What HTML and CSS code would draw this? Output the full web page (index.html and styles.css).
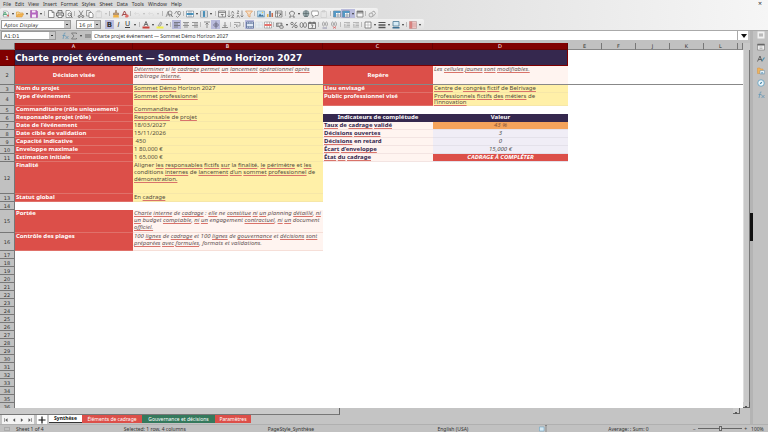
FILE: index.html
```html
<!DOCTYPE html>
<html lang="fr">
<head>
<meta charset="utf-8">
<title>Charte projet événement</title>
<link rel="stylesheet" href="styles.css">
</head>
<body>
<svg class="defs" aria-hidden="true">
  <symbol id="template" viewBox="0 0 16 16"><path d="M3 2h7l3 3v9H3z" fill="#eef4ee" stroke="#889" /><path d="M2 11L6 4l4 7M4 9h4" fill="none" stroke="#3c9a68" stroke-width="1.6"/><circle cx="12" cy="11" r="2" fill="#d8645c"/></symbol>
  <symbol id="folder" viewBox="0 0 16 16"><path d="M1 14V4h5l2 2h6v3" fill="#f8d9a0" stroke="#dca23c" stroke-width="1.4"/><path d="M1 14l3-6h11l-3 6z" fill="#f2b552" stroke="#d8923a"/></symbol>
  <symbol id="save" viewBox="0 0 16 16"><path d="M1 1h12l2 2v12H1z" fill="#b566c0" stroke="#9a489f"/><path d="M4 1h7v4H4zM4 9h8v6H4z" fill="#f6eaf7"/></symbol>
  <symbol id="page" viewBox="0 0 16 16"><path d="M3 1h7l4 4v10H3zM10 1v4h4" fill="#fafafa" stroke="#666" stroke-width="1.4"/></symbol>
  <symbol id="print" viewBox="0 0 16 16"><path d="M4 6V1h8v5M4 12H1V6h14v6h-3" fill="#ddd" stroke="#555" stroke-width="1.5"/><path d="M4 10h8v5H4z" fill="#fff" stroke="#555" stroke-width="1.4"/></symbol>
  <symbol id="preview" viewBox="0 0 16 16"><path d="M2 1h7l4 4v10H2z" fill="#fafafa" stroke="#777" stroke-width="1.4"/><circle cx="9" cy="9" r="3" fill="none" stroke="#555" stroke-width="1.4"/><path d="M11 11l4 4" stroke="#555" stroke-width="1.6"/></symbol>
  <symbol id="cut" viewBox="0 0 16 16"><path d="M4 1l6 10M12 1L6 11" stroke="#777" stroke-width="1.6"/><circle cx="4.500" cy="13" r="2" fill="none" stroke="#555" stroke-width="1.5"/><circle cx="11.500" cy="13" r="2" fill="none" stroke="#555" stroke-width="1.5"/></symbol>
  <symbol id="copy" viewBox="0 0 16 16"><path d="M1 1h6l3 3v8H1z" fill="#eee" stroke="#777" stroke-width="1.3"/><path d="M6 5h5l3 3v7H6z" fill="#fff" stroke="#666" stroke-width="1.3"/></symbol>
  <symbol id="paste" viewBox="0 0 16 16"><path d="M2 3h11v12H2zM5 1h5v3H5z" fill="#e6e6e6" stroke="#c4c4c4"/></symbol>
  <symbol id="brush" viewBox="0 0 16 16"><path d="M7 1h2v5h4v4H3V6h4z" fill="#c9a17a" stroke="#80684e"/><path d="M3 10h10l1 5H2z" fill="#f0b244"/></symbol>
  <symbol id="clear" viewBox="0 0 16 16"><path d="M2 12L7 2l5 10M4 9h6" fill="none" stroke="#9a3434" stroke-width="1.7"/><path d="M8 12l4-4 4 4-3 3H9z" fill="#df6d66"/></symbol>
  <symbol id="faint" viewBox="0 0 16 16"><path d="M3 7h8q3 1 1 5M6 4L3 7l3 3" fill="none" stroke="#d8d8d8" stroke-width="1.4"/></symbol>
  <symbol id="find" viewBox="0 0 16 16"><path d="M2 14L6 3l4 11M4 10h4" fill="none" stroke="#888" stroke-width="1.4"/><circle cx="10" cy="6" r="4" fill="none" stroke="#666" stroke-width="1.3"/><path d="M12 9l3 5" stroke="#555" stroke-width="1.6"/></symbol>
  <symbol id="spell" viewBox="0 0 16 16"><path d="M1 8l4-6 3 6M8 3h4q3 2 0 3 3 2 0 3H8z" fill="none" stroke="#777" stroke-width="1.3"/><path d="M4 12l3 3 6-6" fill="none" stroke="#888" stroke-width="1.6"/></symbol>
  <symbol id="rows" viewBox="0 0 16 16"><path d="M1 2h14v12H1z" fill="#fff" stroke="#567"/><path d="M1 6h14v4H1z" fill="#4a9ac8"/><path d="M6 2v12M10 2v12" stroke="#567"/></symbol>
  <symbol id="cols" viewBox="0 0 16 16"><path d="M1 2h14v12H1z" fill="#fff" stroke="#567"/><path d="M6 2h4v12H6z" fill="#4a9ac8"/><path d="M1 6h14M1 10h14" stroke="#567"/></symbol>
  <symbol id="auto" viewBox="0 0 16 16"><path d="M1 2h14v12H1zM1 5h14" fill="#eee" stroke="#666" stroke-width="1.4"/><path d="M5 8h7l-3 3v3H8v-3z" fill="#777"/></symbol>
  <symbol id="asc" viewBox="0 0 16 16"><path d="M4 1v13M1 11l3 3 3-3M9 7l2-5 3 5M9 10h5l-5 5h5" fill="none" stroke="#6b6b6b" stroke-width="1.3"/></symbol>
  <symbol id="desc" viewBox="0 0 16 16"><path d="M12 1v13M9 11l3 3 3-3M2 2h4L2 7h4M2 15l2-5 3 5" fill="none" stroke="#6b6b6b" stroke-width="1.3"/></symbol>
  <symbol id="filter" viewBox="0 0 16 16"><path d="M1 2h14l-5 6v6l-4-2V8z" fill="#f8e0c6" stroke="#dc9656" stroke-width="1.4"/></symbol>
  <symbol id="image" viewBox="0 0 16 16"><path d="M1 2h14v12H1z" fill="#bfe0f5" stroke="#5688aa"/><path d="M2 13l4-6 3 4 2-2 3 4z" fill="#44749a"/><circle cx="11" cy="5" r="1.500" fill="#f2c85a"/></symbol>
  <symbol id="chart" viewBox="0 0 16 16"><path d="M2 8h3v6H2z" fill="#e6b64c"/><path d="M6 2h4v12H6z" fill="#6c8caf"/><path d="M11 6h3v8h-3z" fill="#c96b4b"/></symbol>
  <symbol id="pivot" viewBox="0 0 16 16"><path d="M1 2h13v12H1zM1 6h13M5 2v12" fill="#eee" stroke="#666" stroke-width="1.3"/><path d="M8 12l4-4m-3 0h3v3" fill="none" stroke="#444" stroke-width="1.3"/></symbol>
  <symbol id="omega" viewBox="0 0 16 16"><path d="M2 14h4v-3Q2 9 3 5q5-6 10 0 1 4-3 6v3h4" fill="none" stroke="#666" stroke-width="1.6"/></symbol>
  <symbol id="link" viewBox="0 0 16 16"><circle cx="8" cy="7" r="6" fill="#9aabae" stroke="#627678"/><path d="M2 7h12M8 1v12M4 13h8" stroke="#4d5d60" stroke-width="1.2"/></symbol>
  <symbol id="comment" viewBox="0 0 16 16"><path d="M2 2h12q2 4 0 9H8l-4 4v-4H2q-2-5 0-9z" fill="#fff" stroke="#777" stroke-width="1.3"/></symbol>
  <symbol id="freeze" viewBox="0 0 16 16"><path d="M1 2h14v12H1z" fill="#fff" stroke="#456"/><path d="M1 2h14v4H1zM1 6h5v8H1z" fill="#5598c4"/><path d="M6 10h9M10 6v8" stroke="#567"/></symbol>
  <symbol id="split" viewBox="0 0 16 16"><path d="M2 2h12v12H2zM2 6h12" fill="#f5f5f5" stroke="#666" stroke-width="1.3"/><path d="M2 2h12v3H2z" fill="#777"/></symbol>
  <symbol id="draw" viewBox="0 0 16 16"><circle cx="6" cy="10" r="4" fill="none" stroke="#888" stroke-width="1.3"/><path d="M7 5l5-3 3 5-5 6" fill="none" stroke="#888" stroke-width="1.3"/></symbol>
  <symbol id="al" viewBox="0 0 16 16"><path d="M2 3h12M2 6h8M2 9h12M2 12h8" stroke="#555" stroke-width="1.3"/></symbol>
  <symbol id="ac" viewBox="0 0 16 16"><path d="M2 3h12M4 6h8M2 9h12M4 12h8" stroke="#666" stroke-width="1.3"/></symbol>
  <symbol id="ar" viewBox="0 0 16 16"><path d="M2 3h12M6 6h8M2 9h12M6 12h8" stroke="#666" stroke-width="1.3"/></symbol>
  <symbol id="vt" viewBox="0 0 16 16"><path d="M2 2h12M8 4v10M5 7l3-3 3 3" fill="none" stroke="#666" stroke-width="1.4"/></symbol>
  <symbol id="vc" viewBox="0 0 16 16"><path d="M2 8h12M8 1v5M8 10v5M5 4l3 3 3-3M5 12l3-3 3 3" fill="none" stroke="#556" stroke-width="1.4"/></symbol>
  <symbol id="vb" viewBox="0 0 16 16"><path d="M2 13h12M8 2v9M5 8l3 3 3-3" fill="none" stroke="#666" stroke-width="1.4"/></symbol>
  <symbol id="wrap" viewBox="0 0 16 16"><path d="M2 3h12v7H7M9 7l-3 3 3 3M2 7h5M2 13h2" fill="none" stroke="#888" stroke-width="1.4"/></symbol>
  <symbol id="merge" viewBox="0 0 16 16"><path d="M1 2h14v12H1z" fill="#dfe8f6" stroke="#4a628c" stroke-width="1.4"/><path d="M1 5h14M1 11h14M5 2v3M10 2v3M5 11v3M10 11v3" stroke="#4a628c"/></symbol>
  <symbol id="cells" viewBox="0 0 16 16"><path d="M1 2h14v12H1zM1 8h14M8 2v12" fill="#e8eef2" stroke="#ccd6dc"/></symbol>
  <symbol id="unmerge" viewBox="0 0 16 16"><path d="M1 2h14v12H1zM6 2v12M11 2v12" fill="#fff" stroke="#777"/><path d="M1 6h14v4H1z" fill="#e8716c"/></symbol>
  <symbol id="money" viewBox="0 0 16 16"><path d="M1 4h11v7H1z" fill="#aaa" stroke="#555"/><circle cx="7" cy="7" r="2" fill="#eee"/><ellipse cx="11" cy="12" rx="4" ry="3" fill="#ccc" stroke="#555"/></symbol>
  <symbol id="pct" viewBox="0 0 16 16"><path d="M13 2L4 14" stroke="#555" stroke-width="1.4"/><circle cx="4" cy="5" r="2.500" fill="none" stroke="#555" stroke-width="1.4"/><circle cx="12" cy="11" r="2.500" fill="none" stroke="#555" stroke-width="1.4"/></symbol>
  <symbol id="num" viewBox="0 0 16 16"><ellipse cx="5" cy="8" rx="3" ry="5" fill="none" stroke="#666" stroke-width="1.5"/><ellipse cx="12" cy="8" rx="3" ry="5" fill="none" stroke="#666" stroke-width="1.5"/></symbol>
  <symbol id="date" viewBox="0 0 16 16"><path d="M1 3h14v12H1zM4 1v4M12 1v4M1 5h14" fill="#eee" stroke="#555" stroke-width="1.4"/><path d="M6 8h4l-2 6" fill="none" stroke="#555" stroke-width="1.4"/></symbol>
  <symbol id="dec" viewBox="0 0 16 16"><ellipse cx="5" cy="6" rx="2" ry="4" fill="none" stroke="#888" stroke-width="1.3"/><ellipse cx="11" cy="6" rx="2" ry="4" fill="none" stroke="#888" stroke-width="1.3"/><path d="M3 14h9" stroke="#779" stroke-width="1.5"/></symbol>
  <symbol id="decr" viewBox="0 0 16 16"><ellipse cx="5" cy="6" rx="2" ry="4" fill="none" stroke="#888" stroke-width="1.3"/><ellipse cx="11" cy="6" rx="2" ry="4" fill="none" stroke="#888" stroke-width="1.3"/><path d="M6 11l6 4m0-4l-6 4" stroke="#d66" stroke-width="1.5"/></symbol>
  <symbol id="indent" viewBox="0 0 16 16"><path d="M2 3h12M7 6h7M7 9h7M2 12h12M2 6l3 2-3 2" fill="none" stroke="#999" stroke-width="1.3"/></symbol>
  <symbol id="border" viewBox="0 0 16 16"><path d="M2 2h12v12H2z" fill="#fff" stroke="#666" stroke-width="1.5"/><path d="M2 8h12M8 2v12" stroke="#999"/></symbol>
  <symbol id="lines" viewBox="0 0 16 16"><path d="M1 3h14" stroke="#555" stroke-width="2"/><path d="M1 8h14" stroke="#555" stroke-width="3"/><path d="M1 13h14" stroke="#555" stroke-width="3"/></symbol>
  <symbol id="bcolor" viewBox="0 0 16 16"><path d="M2 1h12v9H2z" fill="#d7ebf6" stroke="#4d7a96" stroke-width="1.6"/><path d="M1 12h14v3H1z" fill="#3b6f92"/></symbol>
  <symbol id="cond" viewBox="0 0 16 16"><path d="M1 1h14v14H1z" fill="#f0c5c3" stroke="#a88"/><path d="M6 1v14M1 6h14M1 10h14" stroke="#b88"/><path d="M1 1h5v14H1z" fill="#d8827f"/></symbol>
  <symbol id="fcolor" viewBox="0 0 16 16"><path d="M4 10L8 1l4 9M6 7h4" fill="none" stroke="#555" stroke-width="1.7"/><path d="M1 11h14v4H1z" fill="#c9403a"/></symbol>
  <symbol id="hcolor" viewBox="0 0 16 16"><path d="M4 10l5-8 3 2-4 7z" fill="#ccc" stroke="#777"/><path d="M1 11h14v4H1z" fill="#f1ee4a"/></symbol>
  <symbol id="fx" viewBox="0 0 16 16"><path d="M9 2Q6 1 6 5L4 14M3 7h6M9 8l6 6M15 8l-6 6" fill="none" stroke="#5c93b4" stroke-width="1.4"/></symbol>
  <symbol id="sum" viewBox="0 0 16 16"><path d="M13 4V2H3l5 6-5 6h10v-2" fill="none" stroke="#666" stroke-width="1.4"/></symbol>
  <symbol id="eq" viewBox="0 0 16 16"><path d="M2 6h12M2 10h12" stroke="#555" stroke-width="1.6"/></symbol>
  <symbol id="menu" viewBox="0 0 16 16"><path d="M1 1h14v14H1z" fill="#f0f0f0"/><path d="M4 6h8M4 8h8M4 10h8" stroke="#777"/></symbol>
  <symbol id="props" viewBox="0 0 16 16"><path d="M1 2h14v12H1z" fill="#eee" stroke="#666"/><path d="M1 2h14v3H1z" fill="#666"/><path d="M5 8h6M5 11h6" stroke="#888"/></symbol>
  <symbol id="styles" viewBox="0 0 16 16"><path d="M1 13L6 2l4 11M3 9h6" fill="none" stroke="#555" stroke-width="1.7"/><path d="M10 12l5-7" stroke="#4c8fae" stroke-width="2.400"/></symbol>
  <symbol id="gallery" viewBox="0 0 16 16"><path d="M1 2h5l1 2h5v9H1z" fill="#f0b45c" stroke="#d89340"/><path d="M6 7h9v7H6z" fill="#e6f1f7" stroke="#6c8ca0"/><path d="M7 13l3-3 4 3z" fill="#508ab0"/></symbol>
  <symbol id="nav" viewBox="0 0 16 16"><circle cx="8" cy="8" r="6.500" fill="#eef7fb" stroke="#5b9cbd" stroke-width="1.600"/><path d="M11 5L9 9l-4 2 2-4z" fill="#3d7fa4"/></symbol>
  <symbol id="prev" viewBox="0 0 16 16"><path d="M11 3L5 8l6 5z" fill="#555"/></symbol>
  <symbol id="next" viewBox="0 0 16 16"><path d="M5 3l6 5-6 5z" fill="#555"/></symbol>
  <symbol id="first" viewBox="0 0 16 16"><path d="M12 3L6 8l6 5z" fill="#555"/><path d="M4 3v10" stroke="#555" stroke-width="1.500"/></symbol>
  <symbol id="last" viewBox="0 0 16 16"><path d="M4 3l6 5-6 5z" fill="#555"/><path d="M12 3v10" stroke="#555" stroke-width="1.500"/></symbol>
  <symbol id="plus" viewBox="0 0 16 16"><path d="M8 1v14M1 8h14" stroke="#111" stroke-width="2.400"/></symbol>
  <symbol id="sel" viewBox="0 0 16 16"><path d="M1 4h9v8H1z" fill="#d5e8f2" stroke="#5d9cc0"/><path d="M14 1v14M12 1h4M12 15h4" stroke="#555"/></symbol>
</svg>

<div class="app">
  <header class="top">
    <nav class="menubar">
      <button>File</button><button>Edit</button><button>View</button><button>Insert</button><button>Format</button><button>Styles</button><button>Sheet</button><button>Data</button><button>Tools</button><button>Window</button><button>Help</button>
      <button class="close" aria-label="Fermer">×</button>
    </nav>
    <div class="toolbar">
      <button aria-label="Modèle"><svg><use href="#template"/></svg></button><i class="caret"></i><button aria-label="Ouvrir"><svg><use href="#folder"/></svg></button><i class="caret"></i><button aria-label="Enregistrer"><svg><use href="#save"/></svg></button><i class="caret"></i><i class="sep"></i>
      <button aria-label="PDF"><svg><use href="#page"/></svg></button><button aria-label="Imprimer"><svg><use href="#print"/></svg></button><button aria-label="Aperçu"><svg><use href="#preview"/></svg></button><i class="sep"></i>
      <button aria-label="Couper"><svg><use href="#cut"/></svg></button><button aria-label="Copier"><svg><use href="#copy"/></svg></button><button aria-label="Coller"><svg><use href="#paste"/></svg></button><i class="caret pale"></i><i class="sep"></i>
      <button aria-label="Cloner"><svg><use href="#brush"/></svg></button><button aria-label="Effacer le format"><svg><use href="#clear"/></svg></button><i class="sep"></i>
      <button aria-label="Annuler"><svg><use href="#faint"/></svg></button><i class="caret pale"></i><button aria-label="Rétablir"><svg><use href="#faint"/></svg></button><i class="caret pale"></i><i class="sep wide"></i>
      <button aria-label="Rechercher"><svg><use href="#find"/></svg></button><button aria-label="Orthographe"><svg><use href="#spell"/></svg></button><i class="sep"></i>
      <button aria-label="Ligne"><svg><use href="#rows"/></svg></button><i class="caret"></i><button aria-label="Colonne"><svg><use href="#cols"/></svg></button><i class="caret"></i><i class="sep wide"></i>
      <button aria-label="Autofiltre"><svg><use href="#auto"/></svg></button><button aria-label="Tri croissant"><svg><use href="#asc"/></svg></button><button aria-label="Tri décroissant"><svg><use href="#desc"/></svg></button><button aria-label="Filtre"><svg><use href="#filter"/></svg></button><i class="sep"></i>
      <button aria-label="Image"><svg><use href="#image"/></svg></button><button aria-label="Diagramme"><svg><use href="#chart"/></svg></button><button aria-label="Table dynamique"><svg><use href="#pivot"/></svg></button><i class="sep wide"></i>
      <button aria-label="Symbole"><svg><use href="#omega"/></svg></button><i class="caret"></i><button aria-label="Lien"><svg><use href="#link"/></svg></button><button aria-label="Commentaire"><svg><use href="#comment"/></svg></button><button aria-label="En-têtes"><svg><use href="#paste"/></svg></button><i class="sep wide"></i>
      <button aria-label="Zone d'impression"><svg><use href="#freeze"/></svg></button><button class="on" aria-label="Figer"><svg><use href="#freeze"/></svg></button><i class="caret on"></i><button aria-label="Scinder"><svg><use href="#split"/></svg></button><i class="sep"></i><button aria-label="Dessin"><svg><use href="#draw"/></svg></button>
    </div>
    <div class="toolbar format">
      <select class="font" aria-label="Police"><option>Aptos Display</option></select>
      <select class="size" aria-label="Taille"><option>16 pt</option></select>
      <button class="on letter" aria-label="Gras"><b>B</b></button><button class="letter" aria-label="Italique"><em>I</em></button><button class="letter" aria-label="Souligné"><span class="under">U</span></button><i class="caret"></i><i class="sep wide"></i>
      <button aria-label="Couleur"><svg><use href="#fcolor"/></svg></button><i class="caret"></i><button aria-label="Surlignage"><svg><use href="#hcolor"/></svg></button><i class="caret"></i><i class="sep"></i>
      <button class="on" aria-label="Gauche"><svg><use href="#al"/></svg></button><button aria-label="Centre"><svg><use href="#ac"/></svg></button><button aria-label="Droite"><svg><use href="#ar"/></svg></button><i class="sep"></i>
      <button aria-label="Haut"><svg><use href="#vt"/></svg></button><button class="on" aria-label="Milieu"><svg><use href="#vc"/></svg></button><button aria-label="Bas"><svg><use href="#vb"/></svg></button><i class="sep"></i>
      <button aria-label="Renvoi à la ligne"><svg><use href="#wrap"/></svg></button><i class="sep wide"></i>
      <button class="on" aria-label="Fusionner et centrer"><svg><use href="#merge"/></svg></button><button aria-label="Fusionner"><svg><use href="#cells"/></svg></button><button aria-label="Scinder les cellules"><svg><use href="#unmerge"/></svg></button><i class="sep"></i>
      <button aria-label="Monnaie"><svg><use href="#money"/></svg></button><i class="caret"></i><button aria-label="Pourcentage"><svg><use href="#pct"/></svg></button><button aria-label="Nombre"><svg><use href="#num"/></svg></button><button aria-label="Date"><svg><use href="#date"/></svg></button><i class="sep wide"></i>
      <button aria-label="Ajouter décimale"><svg><use href="#dec"/></svg></button><button aria-label="Supprimer décimale"><svg><use href="#decr"/></svg></button><i class="sep wide"></i>
      <button aria-label="Augmenter le retrait"><svg><use href="#indent"/></svg></button><button aria-label="Réduire le retrait"><svg><use href="#indent"/></svg></button><i class="sep"></i>
      <button aria-label="Bordures"><svg><use href="#border"/></svg></button><i class="caret"></i><button aria-label="Style de bordure"><svg><use href="#lines"/></svg></button><i class="caret"></i><button aria-label="Couleur de bordure"><svg><use href="#bcolor"/></svg></button><i class="caret"></i><i class="sep"></i>
      <button aria-label="Conditionnel"><svg><use href="#cond"/></svg></button><i class="caret"></i>
    </div>
  </header>

  <div class="work">
    <main class="main">
      <div class="formula">
        <select class="namebox" aria-label="Zone de nom"><option>A1:D1</option></select>
        <button aria-label="Assistant"><svg><use href="#fx"/></svg></button>
        <button aria-label="Somme"><svg><use href="#sum"/></svg></button><i class="caret"></i>
        <button aria-label="Formule"><svg><use href="#eq"/></svg></button>
        <input aria-label="Ligne de saisie" value="Charte projet événement — Sommet Démo Horizon 2027">
        <button class="expand" aria-label="Développer"><i class="caret big"></i></button>
      </div>
      <div class="gridarea">
        <div class="sheet">
          <table>
            <colgroup><col class="w-head"><col class="w-a"><col class="w-b"><col class="w-c"><col class="w-d"><col class="w-e"><col class="w-e"><col class="w-e"><col class="w-e"><col class="w-e"><col></colgroup>
            <thead><tr><th></th><th class="sel">A</th><th class="sel">B</th><th class="sel">C</th><th class="sel">D</th><th>E</th><th>F</th><th>J</th><th>K</th><th>L</th><th></th></tr></thead>
            <tbody>
            <tr class="r-title"><th class="sel">1</th><td class="title" colspan="4">Charte projet événement — Sommet Démo Horizon 2027</td><td colspan="6"></td></tr>
            <tr class="r-frozen"><th>2</th><td class="label mid">Décision visée</td><td class="note"><u>Déterminer</u> si <u>le</u> <u>cadrage</u> <u>permet</u> <u>un</u> <u>lancement</u> <u>opérationnel</u> <u>après</u> arbitrage <u>interne.</u></td><td class="label mid">Repère</td><td class="note">Les <u>cellules</u> <u>jaunes</u> <u>sont</u> <u>modifiables.</u></td><td colspan="6"></td></tr>
            <tr><th>3</th><td class="label">Nom du projet</td><td class="field"><u>Sommet</u> <u>Démo</u> Horizon 2027</td><td class="label">Lieu envisagé</td><td class="field"><u>Centre</u> de <u>congrès</u> <u>fictif</u> de <u>Belrivage</u></td><td colspan="6"></td></tr>
            <tr class="r-two"><th>4</th><td class="label">Type d’événement</td><td class="field"><u>Sommet</u> <u>professionnel</u></td><td class="label">Public professionnel visé</td><td class="field"><u>Professionnels</u> <u>fictifs</u> <u>des</u> <u>métiers</u> de <u>l’innovation</u></td><td colspan="6"></td></tr>
            <tr><th>5</th><td class="label">Commanditaire (rôle uniquement)</td><td class="field"><u>Commanditaire</u></td><td colspan="8"></td></tr>
            <tr><th>6</th><td class="label">Responsable projet (rôle)</td><td class="field"><u>Responsable</u> de <u>projet</u></td><td class="head">Indicateurs de complétude</td><td class="head">Valeur</td><td colspan="6"></td></tr>
            <tr><th>7</th><td class="label">Date de l’événement</td><td class="field">18/03/2027</td><td class="kpi"><u>Taux</u> de <u>cadrage</u> <u>validé</u></td><td class="value warn">43 %</td><td colspan="6"></td></tr>
            <tr><th>8</th><td class="label">Date cible de validation</td><td class="field">15/11/2026</td><td class="kpi"><u>Décisions</u> <u>ouvertes</u></td><td class="value">3</td><td colspan="6"></td></tr>
            <tr><th>9</th><td class="label">Capacité indicative</td><td class="field">&nbsp;450</td><td class="kpi"><u>Décisions</u> en retard</td><td class="value">0</td><td colspan="6"></td></tr>
            <tr><th>10</th><td class="label">Enveloppe maximale</td><td class="field">1 80,000 €</td><td class="kpi"><u>Écart</u> <u>d’enveloppe</u></td><td class="value">15,000 €</td><td colspan="6"></td></tr>
            <tr><th>11</th><td class="label">Estimation initiale</td><td class="field">1 65,000 €</td><td class="kpi"><u>État</u> <u>du</u> <u>cadrage</u></td><td class="value alert">CADRAGE À COMPLÉTER</td><td colspan="6"></td></tr>
            <tr class="r-goal"><th>12</th><td class="label">Finalité</td><td class="field">Aligner <u>les</u> <u>responsables</u> <u>fictifs</u> <u>sur</u> la <u>finalité</u>, <u>le</u> <u>périmètre</u> et <u>les</u> conditions <u>internes</u> de <u>lancement</u> <u>d’un</u> <u>sommet</u> <u>professionnel</u> de <u>démonstration.</u></td><td colspan="8"></td></tr>
            <tr><th>13</th><td class="label">Statut global</td><td class="field">En <u>cadrage</u></td><td colspan="8"></td></tr>
            <tr><th>14</th><td colspan="10"></td></tr>
            <tr class="r-scope"><th>15</th><td class="label">Portée</td><td class="note"><u>Charte</u> <u>interne</u> de <u>cadrage</u> : <u>elle</u> ne <u>constitue</u> <u>ni</u> <u>un</u> planning <u>détaillé</u>, <u>ni</u> <u>un</u> budget <u>comptable</u>, <u>ni</u> <u>un</u> engagement <u>contractuel</u>, <u>ni</u> <u>un</u> document <u>officiel.</u></td><td colspan="8"></td></tr>
            <tr class="r-check"><th>16</th><td class="label">Contrôle des plages</td><td class="note">100 <u>lignes</u> de <u>cadrage</u> et 100 <u>lignes</u> de <u>gouvernance</u> et <u>décisions</u> <u>sont</u> <u>préparées</u> <u>avec</u> <u>formules</u>, formats et validations.</td><td colspan="8"></td></tr>
            <tr><th>17</th><td colspan="10"></td></tr><tr><th>18</th><td colspan="10"></td></tr><tr><th>19</th><td colspan="10"></td></tr><tr><th>20</th><td colspan="10"></td></tr><tr><th>21</th><td colspan="10"></td></tr><tr><th>22</th><td colspan="10"></td></tr><tr><th>23</th><td colspan="10"></td></tr><tr><th>24</th><td colspan="10"></td></tr><tr><th>25</th><td colspan="10"></td></tr><tr><th>26</th><td colspan="10"></td></tr><tr><th>27</th><td colspan="10"></td></tr><tr><th>28</th><td colspan="10"></td></tr><tr><th>29</th><td colspan="10"></td></tr><tr><th>30</th><td colspan="10"></td></tr><tr><th>31</th><td colspan="10"></td></tr><tr><th>32</th><td colspan="10"></td></tr><tr><th>33</th><td colspan="10"></td></tr><tr><th>34</th><td colspan="10"></td></tr><tr><th>35</th><td colspan="10"></td></tr><tr><th>36</th><td colspan="10"></td></tr>
            </tbody>
          </table>
        </div>
        <div class="vscroll"><i class="thumb"></i><button aria-label="Défiler vers le bas"><i class="caret"></i></button></div>
      </div>
      <div class="hscroll"><i class="thumb"></i><button aria-label="Défiler à droite"><i class="caret"></i></button></div>
      <div class="tabs">
        <div class="navs"><button aria-label="Première"><svg><use href="#first"/></svg></button><button aria-label="Précédente"><svg><use href="#prev"/></svg></button><button aria-label="Suivante"><svg><use href="#next"/></svg></button><button aria-label="Dernière"><svg><use href="#last"/></svg></button></div>
        <button class="add" aria-label="Ajouter une feuille"><svg><use href="#plus"/></svg></button>
        <button class="tab current">Synthèse</button><button class="tab red elements">Éléments de cadrage</button><button class="tab green">Gouvernance et décisions</button><button class="tab red params">Paramètres</button>
      </div>
    </main>
    <i class="grip"></i>
    <aside class="side">
      <button aria-label="Réglages"><svg><use href="#menu"/></svg></button><button aria-label="Propriétés"><svg><use href="#props"/></svg></button><button aria-label="Styles"><svg><use href="#styles"/></svg></button><button aria-label="Galerie"><svg><use href="#gallery"/></svg></button><button aria-label="Navigateur"><svg><use href="#nav"/></svg></button><button aria-label="Fonctions"><svg><use href="#fx"/></svg></button>
    </aside>
  </div>

  <footer class="status">
    <span class="s-doc"><i class="docmark"></i>Sheet 1 of 4</span><span class="s-sel">Selected: 1 row, 4 columns</span><span class="s-style">PageStyle_Synthèse</span><span class="s-lang">English (USA)</span><span class="s-mode"><svg><use href="#sel"/></svg></span><span class="s-sum">Average: ; Sum: 0</span>
    <span class="s-zoom"><i>−</i><input type="range" aria-label="Zoom" min="0" max="100" value="50"><i>+</i></span><span class="s-pct">100%</span>
  </footer>
</div>
</body>
</html>
```
FILE: styles.css
```css
* { box-sizing: border-box; }
html, body { height: 100%; margin: 0; }
body { background: #c1c1c1; color: #333; font: 5px/6px "Noto Sans", "DejaVu Sans", sans-serif; overflow: hidden; }
button, input, select { font: inherit; color: inherit; margin: 0; padding: 0; border: 0; background: none; border-radius: 0; }
i { font-style: normal; }
svg { display: block; width: 8px; height: 8px; }
.defs { position: absolute; width: 0; height: 0; }
.app { height: 100vh; display: flex; flex-direction: column; }

.top { background: linear-gradient(90deg, #d6d6d6, #dedede 50%, #f6f6f6); border-bottom: 1px solid #aaa; height: 31px; }
.menubar { display: flex; gap: 4px; height: 8px; padding: 0 6px 0 3px; align-items: center; }
.close { margin-left: auto; font-size: 7px; }
.toolbar { display: flex; align-items: center; height: 11px; width: max-content; padding: 0 2px 0 1px; background: linear-gradient(#f2f2f2, #e0e0e0); border-radius: 2px; }
.toolbar button { width: 9px; height: 9px; display: grid; place-items: center; flex: none; }
.toolbar .on { background: #b9bbdc; }
.caret { width: 5px; height: 9px; display: grid; place-items: center; flex: none; }
.caret::before { content: ""; border: 1px solid transparent; border-top: 2px solid #333; border-bottom: 0; }
.caret.pale::before { border-top-color: #bbb; }
.caret.big::before { border: 3px solid transparent; border-top: 4px solid #111; border-bottom: 0; }
.sep { width: 3px; height: 7px; flex: none; background: linear-gradient(#bbb, #bbb) center / 1px 5px no-repeat; }
.sep.wide { width: 4px; }
.letter { font: 7px/8px "DejaVu Sans", sans-serif; }
.under { border-bottom: 1px solid #444; line-height: 6px; }
select { appearance: none; border: 1px solid #999; height: 9px; padding: 0 8px 0 2px; font: 5px/6px "DejaVu Sans", sans-serif; background: linear-gradient(#333, #333) right 2px center / 2px 1px no-repeat, linear-gradient(#c6c6c6, #c6c6c6) right / 6px 100% no-repeat, #fff; }
.font { width: 70px; margin-right: 5px; font-style: italic; }
.size { width: 25px; margin-right: 4px; }

.work { flex: 1; min-height: 0; display: flex; }
.main { flex: 1; min-width: 0; display: flex; flex-direction: column; }
.formula { display: flex; align-items: center; height: 12px; padding: 0 2px 3px 1px; }
.formula button { width: 9px; height: 9px; display: grid; place-items: center; }
.formula .namebox { width: 55px; margin-right: 4px; }
.formula input { flex: 1; min-width: 0; height: 9px; background: #fff; padding: 0 2px; }
.formula .expand { width: 11px; background: #fff; border-left: 1px solid #aaa; }
.gridarea { flex: 1; min-height: 0; display: flex; }
.sheet { flex: 1; min-width: 0; overflow: hidden; background: #fff; }
table { width: 100%; table-layout: fixed; border-collapse: separate; border-spacing: 0; font: 6px/7px "Noto Sans", "DejaVu Sans", sans-serif; }
.w-head { width: 15px; } .w-a { width: 118px; } .w-b { width: 190px; } .w-c { width: 110px; } .w-d { width: 135px; } .w-e { width: 34px; }
tr { height: 8px; }
th, td { padding: 0 1px; }
th { background: #c1c1c1; border-bottom: 1px solid #777; border-right: 1px solid #777; font: 5px/6px "DejaVu Sans", sans-serif; color: #333; vertical-align: middle; }
thead th { height: 7px; border-bottom-color: #888; }
thead tr { height: 7px; }
th.sel { background: #800000; color: #fff; border-color: #600; }
td { vertical-align: top; }
.r-title { height: 16px; } .r-frozen { height: 19px; } .r-two { height: 13px; line-height: 6px; } .r-goal { height: 32px; } .r-scope { height: 23px; } .r-check { height: 18px; }
.title { background: #35284e; color: #fff; font: bold 9px/10px "DejaVu Sans", sans-serif; vertical-align: middle; border: 1px solid #800000; border-top: 0; border-left: 0; padding: 0; }
.r-frozen td { border-bottom: 1px solid #888; }
.label { background: #dc4f49; color: #fff; font-weight: bold; border-bottom: 1px solid #e0716a; }
.label.mid { text-align: center; vertical-align: middle; }
.field { background: #fff0a8; color: #554c3c; border-bottom: 1px solid #f6e7a8; }
.note { background: #fff4f0; color: #655; font-style: italic; border-bottom: 1px solid #f6dfd8; }
.head { background: #35284e; color: #fff; font-weight: bold; text-align: center; }
.kpi { background: #fff4f0; color: #35284e; font-weight: bold; border-bottom: 1px solid #f3e4e2; }
.value { background: #f0edf6; color: #555; font-style: italic; text-align: center; border-bottom: 1px solid #e4e1ea; }
.warn { background: #f4a35c; color: #8a5638; }
.alert { background: #dc4f49; color: #fff; font-weight: bold; }
u { text-decoration: underline 1px #d9736a; text-underline-offset: 1px; text-decoration-skip-ink: none; }

.vscroll { width: 7px; display: flex; flex-direction: column; background: #c8c8c8; }
.vscroll .thumb { flex: 1; margin-top: 7px; border-right: 1px solid #777; border-left: 1px solid #ddd; }
.vscroll button, .hscroll button { width: 7px; height: 6px; background: #ccc; border-right: 1px solid #666; border-bottom: 1px solid #666; display: grid; place-items: center; }
.hscroll { height: 7px; display: flex; justify-content: space-between; background: #c4c4c4; padding-right: 10px; }
.hscroll .thumb { width: 46%; border-right: 1px solid #666; border-bottom: 1px solid #777; background: #cacaca; }
.tabs { height: 9px; display: flex; padding-left: 2px; background: #c4c4c4; }
.navs { display: flex; background: #f4f4f4; margin-right: 3px; }
.navs button { width: 8px; display: grid; place-items: center; }
.navs svg { width: 6px; height: 6px; }
.add { width: 10px; background: #fff; display: grid; place-items: center; margin-right: 2px; }
.tab { height: 8px; color: #fff; font: 5px/7px "Noto Sans", "DejaVu Sans", sans-serif; text-align: center; white-space: nowrap; }
.current { width: 33px; background: #fff; color: #111; font-weight: bold; border-bottom: 1px solid #333; }
.elements { width: 60px; } .green { width: 73px; background: #35795c; } .params { width: 36px; }
.red { background: #dc4f49; }

.grip { width: 3px; background: linear-gradient(#111, #111) center 182px / 3px 28px no-repeat, #b4b4b4; }
.side { width: 15px; display: flex; flex-direction: column; align-items: center; gap: 4px; background: #c1c1c1; }
.side button { height: 8px; }

.status { height: 8px; display: flex; align-items: center; border-top: 1px solid #b0b0b0; white-space: nowrap; }
.status span { display: flex; align-items: center; min-width: 0; }
.s-doc { flex: 120; gap: 6px; padding-left: 4px; }
.docmark { width: 6px; height: 4px; border: 1px solid #aaa; }
.s-sel { flex: 144; } .s-style { flex: 170; } .s-lang { flex: 102; } .s-mode { flex: 69; } .s-sum { flex: 85; }
.s-zoom { flex: 54; gap: 2px; padding-right: 4px; }
.s-zoom input { appearance: none; flex: 1; width: 0; min-width: 0; height: 5px; background: linear-gradient(#666, #666) center / 100% 1px no-repeat; }
.s-zoom input::-webkit-slider-thumb { appearance: none; width: 3px; height: 5px; background: #ccc; border: 1px solid #666; }
.s-pct { flex: 17; }
```
